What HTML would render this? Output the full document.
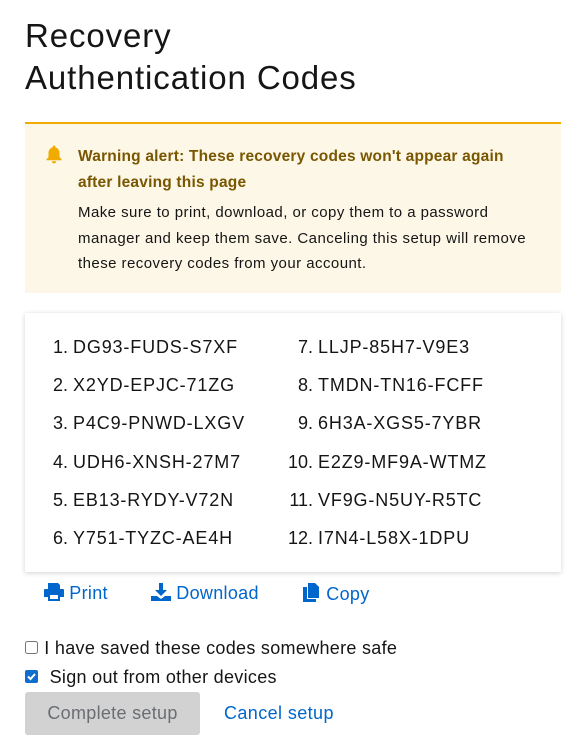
<!DOCTYPE html>
<html><head><style>
body{margin:0;background:#fff;font-family:"Liberation Sans",sans-serif;color:#151515;width:583px;height:747px;overflow:hidden;position:relative}
.a{position:absolute}
h1{position:absolute;left:25px;top:15px;margin:0;font-weight:400;font-size:33px;line-height:42px;letter-spacing:0.9px}
.alert{left:25px;top:122px;width:536px;height:171px;background:#fdf7e7;border-top:2px solid #f0ab00;box-sizing:border-box}
.at{left:53px;top:20px;font-size:15.5px;font-weight:700;color:#795600;line-height:26px;width:450px;letter-spacing:0.2px}
.ab{left:53px;top:76px;font-size:15px;color:#151515;line-height:25.5px;width:470px;letter-spacing:0.45px}
.card{left:25px;top:313px;width:536px;height:259px;background:#fff;box-shadow:0 1px 5px rgba(3,3,3,.18)}
.col{position:absolute;font-size:18px;line-height:38.2px;top:15px;letter-spacing:0.85px}
.col div{white-space:nowrap}
.col span{display:inline-block;text-align:right;width:28px;margin-right:5px;letter-spacing:0}
.lnk{color:#0066cc;font-size:18px;top:583px;letter-spacing:0.3px}
.cb{font-size:18px;top:638px;left:25px;letter-spacing:0.3px}
.btn{left:25px;top:692px;width:175px;height:43px;background:#d2d2d2;border-radius:3px;color:#6a6e73;font-size:18px;text-align:center;line-height:43px;letter-spacing:0.3px}
</style></head><body>
<h1>Recovery<br>Authentication Codes</h1>
<div class="a alert">
<svg class="a" style="left:20px;top:21px" width="18" height="19" viewBox="0 0 18 19"><path d="M9 0.5c.8 0 1.3.6 1.3 1.3v.6c2.6.6 4.2 2.8 4.2 5.5v4.2l2 2.2v1H1.5v-1l2-2.2V7.9c0-2.7 1.6-4.9 4.2-5.5v-.6C7.7 1.1 8.2.5 9 .5zM6.8 16.2h4.4c0 1.3-1 2.2-2.2 2.2s-2.2-.9-2.2-2.2z" fill="#f0ab00"/></svg>
<div class="a at">Warning alert: These recovery codes won't appear again after leaving this page</div>
<div class="a ab">Make sure to print, download, or copy them to a password manager and keep them save. Canceling this setup will remove these recovery codes from your account.</div>
</div>
<div class="a card">
<div class="col" style="left:15px">
<div><span>1.</span>DG93-FUDS-S7XF</div>
<div><span>2.</span>X2YD-EPJC-71ZG</div>
<div><span>3.</span>P4C9-PNWD-LXGV</div>
<div><span>4.</span>UDH6-XNSH-27M7</div>
<div><span>5.</span>EB13-RYDY-V72N</div>
<div><span>6.</span>Y751-TYZC-AE4H</div>
</div>
<div class="col" style="left:260px">
<div><span>7.</span>LLJP-85H7-V9E3</div>
<div><span>8.</span>TMDN-TN16-FCFF</div>
<div><span>9.</span>6H3A-XGS5-7YBR</div>
<div><span>10.</span>E2Z9-MF9A-WTMZ</div>
<div><span>11.</span>VF9G-N5UY-R5TC</div>
<div><span>12.</span>I7N4-L58X-1DPU</div>
</div>
</div>
<div class="a lnk" style="left:44px"><svg width="20" height="18" viewBox="0 0 20 18" style="vertical-align:-2px"><path d="M4 0h10l2 2v4H4zM1 6h18a1 1 0 011 1v7h-4v4H4v-4H0V7a1 1 0 011-1zM6 12v4h8v-4z" fill="#0066cc"/></svg> Print</div>
<div class="a lnk" style="left:151px"><svg width="20" height="18" viewBox="0 0 20 18" style="vertical-align:-2px"><path d="M8 0h4v7h4l-6 6-6-6h4zM0 13h6l4 3 4-3h6v5H0z" fill="#0066cc"/></svg> Download</div>
<div class="a lnk" style="left:303px"><svg width="18" height="19" viewBox="0 0 18 19" style="vertical-align:-2px"><path d="M5 0h7l4 4v11H5zM0 4h4v12h9v3H0z" fill="#0066cc"/></svg> Copy</div>
<div class="a cb"><svg width="14" height="14" style="vertical-align:-1px"><rect x=".5" y=".5" width="12" height="12" rx="2" fill="#fff" stroke="#767676"/></svg> I have saved these codes somewhere safe</div>
<div class="a cb" style="top:667px"><svg width="14" height="14" style="vertical-align:-1px"><rect width="13" height="13" rx="2" fill="#0f6ecd"/><path d="M3 6.5l2.5 2.5 4.5-5" stroke="#fff" stroke-width="2" fill="none"/></svg>&nbsp; Sign out from other devices</div>
<div class="a btn">Complete setup</div>
<div class="a" style="left:224px;top:703px;font-size:18px;color:#0066cc;letter-spacing:0.4px">Cancel setup</div>
</body></html>
